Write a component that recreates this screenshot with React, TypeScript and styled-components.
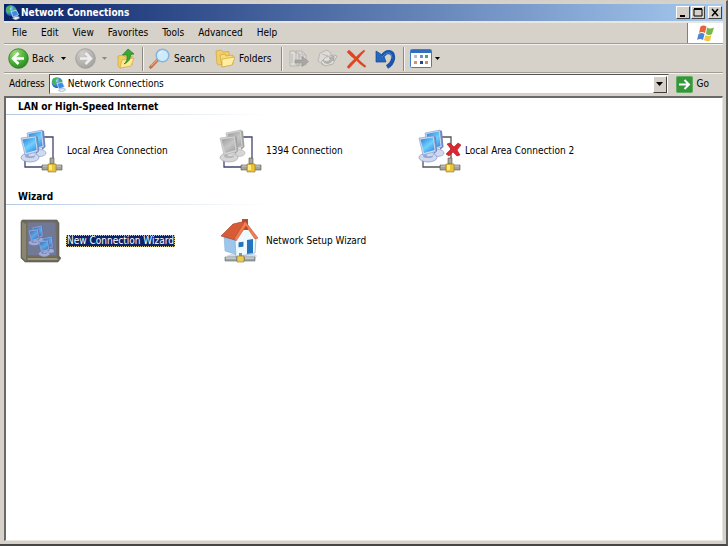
import React from 'react';
import styled, { createGlobalStyle, css } from 'styled-components';

const Global = createGlobalStyle`
  * { box-sizing: border-box; }
  html, body, #root { height: 100%; margin: 0; }
  body {
    background: #d4d0c8;
    color: #000;
    font: 10px/12px "DejaVu Sans Condensed", "DejaVu Sans", sans-serif;
    overflow: hidden;
  }
  button, input { font: inherit; color: inherit; }
  svg { display: block; flex: none; }
`;

const Window = styled.div`
  display: flex;
  flex-direction: column;
  height: 100vh;
  padding: 3px 3px 3px 4px;
  background: #d6d2ca;
  border: solid;
  border-width: 1px 2px 2px 0;
  border-color: #d4d0c8 #5f5d59 #484644 #d4d0c8;
`;

const TitleBar = styled.header`
  display: flex;
  align-items: center;
  height: 17px;
  flex: none;
  padding: 0 1px;
  gap: 1px;
  background: linear-gradient(90deg, #0a246a, #a6caf0);
`;

const Title = styled.h1`
  flex: 1;
  margin: 0;
  color: #fff;
  font-size: 10px;
  font-weight: bold;
`;

const WindowButton = styled.button<{ $spaced?: boolean }>`
  display: grid;
  place-items: center;
  width: 14px;
  height: 13px;
  padding: 0;
  margin-left: ${p => (p.$spaced ? 2 : 0)}px;
  background: #d4d0c8;
  border: 1px solid;
  border-color: #fff #404040 #404040 #fff;
`;

const MenuRow = styled.div`
  display: flex;
  flex: none;
  height: 23px;
  border-top: 2px solid #e9e6e0;
  border-bottom: 1px solid #a09d96;
`;

const Menu = styled.nav`
  display: flex;
  flex: 1;
  align-items: center;
  gap: 14px;
  padding-left: 8px;
`;

const MenuItem = styled.button`
  padding: 0;
  background: none;
  border: 0;
`;

const LogoBox = styled.div`
  display: grid;
  place-items: center;
  width: 36px;
  background: #fff;
  border-left: 1px solid #808080;
`;

const Toolbar = styled.div`
  display: flex;
  align-items: center;
  flex: none;
  height: 29px;
  padding-left: 4px;
  border-top: 1px solid #f5f3ef;
  border-bottom: 1px solid #a09d96;
`;

const ToolButton = styled.button<{ $w: number }>`
  display: flex;
  align-items: center;
  gap: 3px;
  width: ${p => p.$w}px;
  height: 26px;
  padding: 0;
  background: none;
  border: 0;
  white-space: nowrap;
`;

const Divider = styled.div`
  width: 2px;
  height: 24px;
  margin-right: 5px;
  border-left: 1px solid #8c8983;
  border-right: 1px solid #f5f3ef;
`;

const AddressBar = styled.form`
  display: flex;
  align-items: center;
  flex: none;
  height: 23px;
  padding: 0 14px 2px 5px;
  gap: 4px;
  border-top: 1px solid #f5f3ef;
`;

const AddressField = styled.div`
  display: flex;
  flex: 1;
  align-items: center;
  height: 20px;
  padding: 1px;
  gap: 2px;
  background: #fff;
  border: 1px solid;
  border-color: #55534f #d4d0c8 #d4d0c8 #55534f;
`;

const AddressInput = styled.input`
  flex: 1;
  min-width: 0;
  padding: 0;
  border: 0;
  outline: 0;
  background: none;
`;

const DropButton = styled(WindowButton)`
  width: 14px;
  height: 17px;
`;

const GoButton = styled.button`
  display: flex;
  align-items: center;
  gap: 4px;
  padding: 0;
  margin-left: 3px;
  background: none;
  border: 0;
`;

const Content = styled.main`
  flex: 1;
  min-height: 0;
  overflow: hidden;
  background: #fff;
  border: 1px solid;
  border-width: 2px 1px 1px 2px;
  border-color: #6b6966 #e8e6e0 #e8e6e0 #6b6966;
`;

const Group = styled.section`
  height: 90px;
`;

const GroupTitle = styled.h2`
  height: 17px;
  margin: 0;
  padding: 3px 12px 1px;
  font-size: 10px;
  font-weight: bold;
  border-bottom: 1px solid;
  border-image: linear-gradient(90deg, #b4c8e2, #fff 262px) 1;
`;

const Tiles = styled.div`
  display: grid;
  grid-template-columns: repeat(auto-fill, 199px);
  padding: 13px 0 0 14px;
`;

const TileLabel = styled.span`
  padding: 0 1px;
`;

const Tile = styled.button<{ $selected?: boolean }>`
  display: flex;
  align-items: center;
  gap: 2px;
  height: 46px;
  padding: 0;
  background: none;
  border: 0;
  text-align: left;
  white-space: nowrap;
  ${p => p.$selected && css`
    ${TileLabel} {
      background: #0a246a;
      color: #fff;
      outline: 1px dotted #d8c890;
      outline-offset: -1px;
    }
  `}
`;

const Globe = ({ size }: { size: number }) => (
  <svg width={size} height={size} viewBox="0 0 16 16" aria-hidden="true">
    <defs>
      <radialGradient id="globe" cx=".35" cy=".3" r=".8">
        <stop offset="0" stopColor="#c5ecff" /><stop offset=".5" stopColor="#3d90d6" /><stop offset="1" stopColor="#14448c" />
      </radialGradient>
    </defs>
    <circle cx="6.5" cy="6" r="5.8" fill="url(#globe)" />
    <path d="M1 5Q1 1 5 .5L7 1 5 4 6 6 3 9ZM9 3l3 1v4l-3-1Z" fill="#49b257" />
    <path d="M6.500 7l5.500-1.500 2.500 5L8.500 13Z" fill="#3c8be0" stroke="#dbe9f7" strokeWidth=".8" />
    <path d="M8 14.500q3-3.500 7-2l.5 1.500-4 2Z" fill="#e3ebf2" stroke="#7890a8" strokeWidth=".5" />
  </svg>
);

const Caret = ({ color = '#000' }: { color?: string }) => (
  <svg width="5" height="3" viewBox="0 0 5 3" aria-hidden="true"><path d="M0 0h5L2.500 3Z" fill={color} /></svg>
);

const RoundArrow = ({ back }: { back?: boolean }) => (
  <svg width="21" height="21" viewBox="0 0 21 21" aria-hidden="true">
    <defs>
      <radialGradient id="green" cx=".35" cy=".25" r=".9">
        <stop offset="0" stopColor="#a5dd82" /><stop offset=".5" stopColor="#4fb03a" /><stop offset="1" stopColor="#1d7b18" />
      </radialGradient>
      <radialGradient id="grey" cx=".35" cy=".25" r=".9">
        <stop offset="0" stopColor="#d0cfcc" /><stop offset="1" stopColor="#9d9c98" />
      </radialGradient>
    </defs>
    <circle cx="10.500" cy="10.500" r="9.800" fill={back ? 'url(#green)' : 'url(#grey)'} stroke={back ? '#298322' : '#9c9a96'} strokeWidth=".8" />
    {back
      ? <path d="M10.500 5L5 10.500l5.500 5.500M5.500 10.500H16" fill="none" stroke="#fff" strokeWidth="2.500" />
      : <path d="M10.500 5l5.500 5.500-5.500 5.500M15.500 10.500H5" fill="none" stroke="#eee" strokeWidth="2.500" />}
  </svg>
);

const UpFolder = () => (
  <svg width="18" height="21" viewBox="0 0 18 21" aria-hidden="true">
    <path d="M1 8l5-1 2 2 7-1v9L3 20 1 18Z" fill="#efcf62" stroke="#c89e35" strokeWidth=".6" />
    <path d="M5 12l12-2-3 8-11 2Z" fill="#ffe993" stroke="#cda43d" strokeWidth=".6" />
    <path d="M7 16q4-3 3-9H5.500L11 1l6 5-3.500.5q0 7-6.500 9.500Z" fill="#38aa31" stroke="#1d7b20" strokeWidth=".7" />
  </svg>
);

const Magnifier = () => (
  <svg width="22" height="21" viewBox="0 0 22 21" aria-hidden="true">
    <path d="M1.800 19L8 12.500" stroke="#bd6d42" strokeWidth="3.200" strokeLinecap="round" />
    <path d="M2 18L8 12" stroke="#eca47b" strokeWidth="1.200" />
    <circle cx="13.500" cy="7.500" r="6.300" fill="#cdebfb" stroke="#88b2da" strokeWidth="1.500" />
    <path d="M9.500 7q1-4 5-3.500-4 1-5 3.500Z" fill="#fff" />
  </svg>
);

const Folders = () => (
  <svg width="21" height="19" viewBox="0 0 21 19" aria-hidden="true">
    <path d="M1 2l5-1 2 2 6-.5V13L4 16l-2-1Z" fill="#f1cf65" stroke="#cda33f" strokeWidth=".7" />
    <path d="M5 6l5-1 1 2 7-1v9L7 18Z" fill="#f8dc7c" stroke="#cda33f" strokeWidth=".7" />
    <path d="M7 10l13-2-3 8-10 2Z" fill="#ffee9f" stroke="#cda33f" strokeWidth=".7" />
  </svg>
);

const MoveTo = () => (
  <svg width="21" height="20" viewBox="0 0 21 20" aria-hidden="true">
    <path d="M2 2h5l1 2h3v13H2ZM8 2h6l4 4v10H8Z" fill="#dddbd7" stroke="#aeaca8" strokeWidth=".8" />
    <path d="M14 2v4h4M4 5v9M10 6h3M10 8h6" stroke="#b9b7b3" fill="none" />
    <path d="M7 11h7V7.500l6.500 5-6.500 5V14H7Z" fill="#a9a7a3" stroke="#908e8a" strokeWidth=".6" />
  </svg>
);

const CopyTo = () => (
  <svg width="21" height="20" viewBox="0 0 21 20" aria-hidden="true">
    <path d="M3 4l7-3 4 3v9l-8 3-5-4Z" fill="#dddbd7" stroke="#b0aeaa" strokeWidth=".8" />
    <path d="M9 8l8-2 3 1-4 8-8 2-4-4Z" fill="#e0dedb" stroke="#aaa8a4" strokeWidth=".8" />
    <path d="M5 5l6 2M6 11q4 4 8-1l-2-1 5-2v5l-1-1q-5 6-9 2Z" fill="#b5b3af" stroke="#a3a19c" strokeWidth=".6" />
  </svg>
);

const Delete = () => (
  <svg width="21" height="20" viewBox="0 0 21 20" aria-hidden="true">
    <path d="M1 3l2-2q5 4 7 7 4-4 8-7l1 1q-4 4-7 8 4 4 8 7l-1 1.500q-5-3-8.500-7-4 4-7.500 8l-2-1.500q3-4 7.500-8-4-3-7.500-7Z" fill="#e5421f" stroke="#c53316" strokeWidth=".3" />
  </svg>
);

const Undo = () => (
  <svg width="21" height="20" viewBox="0 0 21 20" aria-hidden="true">
    <path d="M7 8q3-5 7-5 5 1 4 7-1 5-6 8" fill="none" stroke="#1d54a8" strokeWidth="4" />
    <path d="M1 2l4 2.500 4.500 4L11 13H1Z" fill="#2467bd" stroke="#154990" strokeWidth=".7" />
    <path d="M7 8q3-4 7-4.500 3 1 3 6" fill="none" stroke="#4789d9" />
  </svg>
);

const Views = () => (
  <svg width="22" height="19" viewBox="0 0 22 19" aria-hidden="true">
    <rect x=".5" y=".5" width="21" height="18" rx="1" fill="#fff" stroke="#3d7fc4" />
    <path d="M1 1h20v3H1Z" fill="#2f6fc1" />
    <path d="M4 6h3v3H4Z" fill="#b9bdd1" /><path d="M10 6h3v3h-3Z" fill="#6b8bcc" /><path d="M15 6h3v3h-3Z" fill="#55a757" />
    <path d="M4 12h3v3H4Z" fill="#d79475" /><path d="M10 12h3v3h-3Z" fill="#26458f" /><path d="M15 12h3v3h-3Z" fill="#c5905a" />
  </svg>
);

const WindowsFlag = () => (
  <svg width="18" height="17" viewBox="0 0 18 17" aria-hidden="true">
    <path d="M3.500 1.500q3-2 6 0L8 8Q5 6 2 8Z" fill="#e6633c" />
    <path d="M10 2.500q3 2 7 0L15 9q-3 2-6 0Z" fill="#79b74b" />
    <path d="M1.500 9q3-2 6 0L6 15Q3 13 0 15Z" fill="#4c85d3" />
    <path d="M8.500 10q3 2 6 0L13 16q-3 1-6-1Z" fill="#f3c83f" />
  </svg>
);

const GoArrow = () => (
  <svg width="17" height="17" viewBox="0 0 17 17" aria-hidden="true">
    <rect x=".5" y=".5" width="16" height="16" rx="1" fill="#35963a" stroke="#5fae60" />
    <path d="M3 8.500h10M8.500 4l4.500 4.500L8.500 13" fill="none" stroke="#fff" strokeWidth="2" />
  </svg>
);

const Monitors = ({ grey }: { grey?: boolean }) => {
  const screen = grey ? 'url(#screenGrey)' : 'url(#screenBlue)';
  const shell = grey ? '#d6d6d6' : '#cfdaf0';
  const side = grey ? '#a2a2a2' : '#7186bd';
  return (
    <g strokeLinejoin="round">
      <defs>
        <linearGradient id="screenBlue" x1="0" y1="0" x2=".7" y2="1">
          <stop offset="0" stopColor="#2a80d4" /><stop offset=".6" stopColor="#6fd0ff" /><stop offset="1" stopColor="#3796e4" />
        </linearGradient>
        <linearGradient id="screenGrey" x1="0" y1="0" x2=".7" y2="1">
          <stop offset="0" stopColor="#999" /><stop offset=".6" stopColor="#c6c6c6" /><stop offset="1" stopColor="#a6a6a6" />
        </linearGradient>
      </defs>
      <ellipse cx="20" cy="24" rx="6" ry="3.500" fill={shell} stroke={side} strokeWidth=".5" />
      <path d="M21 1l3 1 1.500 16-3.500 3Z" fill={side} />
      <path d="M7 4L22 1l2 17-14 4Z" fill={shell} stroke={side} strokeWidth=".5" />
      <path d="M8.500 5L21 2.500 22.500 17 12 20Z" fill={screen} />
      <ellipse cx="10" cy="28.500" rx="9" ry="4.500" fill={shell} stroke={side} strokeWidth=".6" />
      <ellipse cx="10" cy="27" rx="5" ry="2" fill={side} opacity=".6" />
      <path d="M8 22l6-1 1 5q-3 2-6 1Z" fill={shell} />
      <path d="M15 7l3 1 1 14-3 3Z" fill={side} />
      <path d="M1 9l15-2 2 15.500-13 3.500Z" fill={shell} stroke={side} strokeWidth=".5" />
      <path d="M2.500 10.500L15 8.500 16.500 21 6 24Z" fill={screen} />
    </g>
  );
};

const Plug = () => (
  <g stroke="#55554c" strokeWidth=".6">
    <path d="M22 36h7v5h-7ZM35 36h7v5h-7Z" fill="#a3a397" />
    <path d="M23 37h5M36 37h5" stroke="#eee" />
    <path d="M30 29h4v6h-4Z" fill="#aaa89c" />
    <path d="M28 35h8v8h-8Z" fill="#edc435" stroke="#947521" />
    <path d="M29 36h3v5h-3Z" fill="#ffea86" stroke="none" />
  </g>
);

const ConnectionIcon = ({ grey, broken }: { grey?: boolean; broken?: boolean }) => (
  <svg width="44" height="44" viewBox="0 0 44 44" aria-hidden="true">
    <path d="M24 8h9v22M5 29v9h18" fill="none" stroke={broken ? '#55555b' : '#41446f'} strokeWidth="1.300" />
    <Monitors grey={grey} />
    <Plug />
    {broken && <path d="M29 15l3-1 4 4 4-4 3 2-4 5 3 5-3 1-4-4-4 4-3-2 5-5Z" fill="#dd2730" stroke="#ad1820" strokeWidth=".6" />}
  </svg>
);

const BookIcon = () => (
  <svg width="44" height="44" viewBox="0 0 44 44" aria-hidden="true">
    <path d="M2 1h35l2 3v33l2 2-3 4H5l-4-4V3Z" fill="#6d695a" stroke="#5b5850" strokeWidth=".6" />
    <path d="M2 3l4 2v37l-4-4Z" fill="#8b866f" />
    <path d="M7 3h29l1 34H7Z" fill="#8a8e92" stroke="#77745f" />
    <path d="M7 39h30l1 2H8Z" fill="#9b957d" />
    <g transform="translate(8 6) scale(.62)"><Monitors /></g>
    <g transform="translate(18 17) scale(.62)"><Monitors /></g>
    <path d="M7 3h29l1 34H7Z" fill="#3a4a9c" opacity=".3" />
  </svg>
);

const HouseIcon = () => (
  <svg width="44" height="46" viewBox="0 0 44 46" aria-hidden="true">
    <ellipse cx="23" cy="38" rx="15" ry="3" fill="#d6dde3" />
    <path d="M5 18l15-5 2 25L6 33Z" fill="#9cc6ec" stroke="#82a9cf" strokeWidth=".5" />
    <path d="M16 22L27 7l10 13-1 15-19 4Z" fill="#eef8ff" stroke="#7baed9" strokeWidth=".7" />
    <path d="M23 1h6v11h-6Z" fill="#b64e31" />
    <path d="M2 18L14 6 27 3 16 22Z" fill="#d65c38" stroke="#a8391f" strokeWidth=".6" />
    <path d="M26 3l13 17-3 1-9-13-10 15-2-2Z" fill="#f17d50" stroke="#b2452b" strokeWidth=".5" />
    <path d="M28 22l6-1v14l-6 1Z" fill="#2375be" />
    <path d="M19 24l6-1v6l-6 1Z" fill="#2474b9" stroke="#fff" />
    <path d="M6 39h12v4H6ZM25 39h11v4H25Z" fill="#9ba5a5" stroke="#626b6d" strokeWidth=".6" />
    <path d="M7 40h10M26 40h9" stroke="#e7eced" />
    <path d="M20 35h3v4h-3Z" fill="#8b958c" />
    <path d="M18 38h7v6h-7Z" fill="#edcb50" stroke="#94772a" strokeWidth=".6" />
  </svg>
);

const menus = ['File', 'Edit', 'View', 'Favorites', 'Tools', 'Advanced', 'Help'];

export default function App() {
  return (
    <>
      <Global />
      <Window>
        <TitleBar>
          <Globe size={15} />
          <Title>Network Connections</Title>
          <WindowButton aria-label="Minimize"><svg width="10" height="9"><path d="M2 7h5v2H2Z" /></svg></WindowButton>
          <WindowButton aria-label="Maximize"><svg width="10" height="9"><path d="M1 1h8v7H1Z" fill="none" stroke="#000" /><path d="M1 0h8v2H1Z" /></svg></WindowButton>
          <WindowButton aria-label="Close" $spaced><svg width="10" height="9"><path d="M2 1l6 7M8 1L2 8" stroke="#000" strokeWidth="1.500" /></svg></WindowButton>
        </TitleBar>
        <MenuRow>
          <Menu>{menus.map(m => <MenuItem key={m}>{m}</MenuItem>)}</Menu>
          <LogoBox><WindowsFlag /></LogoBox>
        </MenuRow>
        <Toolbar>
          <ToolButton $w={53}><RoundArrow back />Back</ToolButton>
          <ToolButton $w={14} aria-label="Back history"><Caret /></ToolButton>
          <ToolButton $w={27} aria-label="Forward" disabled><RoundArrow /></ToolButton>
          <ToolButton $w={15} aria-label="Forward history" disabled><Caret color="#8c8983" /></ToolButton>
          <ToolButton $w={25} aria-label="Up"><UpFolder /></ToolButton>
          <Divider />
          <ToolButton $w={66}><Magnifier />Search</ToolButton>
          <ToolButton $w={66}><Folders />Folders</ToolButton>
          <Divider />
          <ToolButton $w={29} aria-label="Move to" disabled><MoveTo /></ToolButton>
          <ToolButton $w={29} aria-label="Copy to" disabled><CopyTo /></ToolButton>
          <ToolButton $w={29} aria-label="Delete"><Delete /></ToolButton>
          <ToolButton $w={28} aria-label="Undo"><Undo /></ToolButton>
          <Divider />
          <ToolButton $w={34} aria-label="Views"><Views /><Caret /></ToolButton>
        </Toolbar>
        <AddressBar onSubmit={e => e.preventDefault()}>
          <label htmlFor="address">Address</label>
          <AddressField>
            <Globe size={15} />
            <AddressInput id="address" defaultValue="Network Connections" />
            <DropButton type="button" aria-label="Show addresses">
              <svg width="7" height="4" viewBox="0 0 7 4" aria-hidden="true"><path d="M0 0h7L3.500 4Z" /></svg>
            </DropButton>
          </AddressField>
          <GoButton><GoArrow />Go</GoButton>
        </AddressBar>
        <Content>
          <Group>
            <GroupTitle>LAN or High-Speed Internet</GroupTitle>
            <Tiles>
              <Tile><ConnectionIcon /><TileLabel>Local Area Connection</TileLabel></Tile>
              <Tile><ConnectionIcon grey /><TileLabel>1394 Connection</TileLabel></Tile>
              <Tile><ConnectionIcon broken /><TileLabel>Local Area Connection 2</TileLabel></Tile>
            </Tiles>
          </Group>
          <Group>
            <GroupTitle>Wizard</GroupTitle>
            <Tiles>
              <Tile $selected><BookIcon /><TileLabel>New Connection Wizard</TileLabel></Tile>
              <Tile><HouseIcon /><TileLabel>Network Setup Wizard</TileLabel></Tile>
            </Tiles>
          </Group>
        </Content>
      </Window>
    </>
  );
}
